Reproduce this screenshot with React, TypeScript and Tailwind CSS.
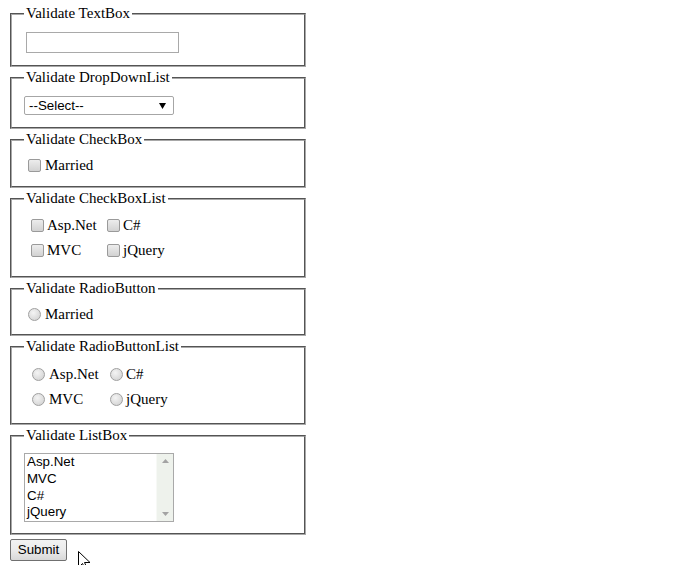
import React from "react";

const legendCls = "px-[2px] text-[15px] leading-[17px] text-black";
const fsCls =
  "box-border w-[296px] border-2 [border-style:groove] border-[#a8a8a8] px-[12px] m-0";

function Check() {
  return (
    <span className="inline-block w-[13px] h-[13px] shrink-0 rounded-[2px] border border-[#9a9a9a] bg-gradient-to-b from-[#ededed] to-[#d2d2d2]" />
  );
}

function Radio() {
  return (
    <span className="inline-block w-[13px] h-[13px] shrink-0 rounded-full border border-[#a0a0a0] bg-[radial-gradient(circle_at_40%_35%,#f4f4f4,#cdcdcd)]" />
  );
}

export default function App() {
  return (
    <div className="relative w-[696px] h-[565px] bg-white pl-[10px] pt-[5px] font-['Liberation_Serif',serif] text-black overflow-hidden">
      <div className="flex flex-col gap-[2px] w-[296px]">
        <fieldset className={`${fsCls} h-[62px]`}>
          <legend className={legendCls}>Validate TextBox</legend>
          <div className="pt-[10px] pl-[2px]">
            <div className="w-[153px] h-[21px] border border-[#a9a9a9] bg-white" />
          </div>
        </fieldset>

        <fieldset className={`${fsCls} h-[60px]`}>
          <legend className={legendCls}>Validate DropDownList</legend>
          <div className="pt-[10px]">
            <div className="flex items-center justify-between w-[150px] h-[19px] border border-[#a6a6a6] rounded-[2px] bg-white pl-[4px] pr-[7px] font-['Liberation_Sans',sans-serif] text-[13.33px] leading-[15px]">
              <span>--Select--</span>
              <svg width="7" height="6" viewBox="0 0 7 6">
                <polygon points="0,0 7,0 3.5,6" fill="#000" />
              </svg>
            </div>
          </div>
        </fieldset>

        <fieldset className={`${fsCls} h-[57px]`}>
          <legend className={legendCls}>Validate CheckBox</legend>
          <div className="pt-[9px]">
            <div className="flex items-center h-[17px] text-[15px] leading-[17px] pl-[4px] gap-[4px]">
              <Check />
              <span>Married</span>
            </div>
          </div>
        </fieldset>

        <fieldset className={`${fsCls} h-[88px]`}>
          <legend className={legendCls}>Validate CheckBoxList</legend>
          <div className="pt-[6px] grid grid-cols-[76px_auto] text-[15px] leading-[17px]">
            <div className="flex items-center h-[25px] pl-[7px] gap-[3px]">
              <Check />
              <span>Asp.Net</span>
            </div>
            <div className="flex items-center h-[25px] pl-[7px] gap-[3px]">
              <Check />
              <span>C#</span>
            </div>
            <div className="flex items-center h-[25px] pl-[7px] gap-[3px]">
              <Check />
              <span>MVC</span>
            </div>
            <div className="flex items-center h-[25px] pl-[7px] gap-[3px]">
              <Check />
              <span>jQuery</span>
            </div>
          </div>
        </fieldset>

        <fieldset className={`${fsCls} h-[56px]`}>
          <legend className={legendCls}>Validate RadioButton</legend>
          <div className="pt-[9px]">
            <div className="flex items-center h-[17px] text-[15px] leading-[17px] pl-[4px] gap-[4px]">
              <Radio />
              <span>Married</span>
            </div>
          </div>
        </fieldset>

        <fieldset className={`${fsCls} h-[87px]`}>
          <legend className={legendCls}>Validate RadioButtonList</legend>
          <div className="pt-[7px] grid grid-cols-[78px_auto] text-[15px] leading-[17px]">
            <div className="flex items-center h-[25px] pl-[8px] gap-[4px]">
              <Radio />
              <span>Asp.Net</span>
            </div>
            <div className="flex items-center h-[25px] pl-[8px] gap-[3px]">
              <Radio />
              <span>C#</span>
            </div>
            <div className="flex items-center h-[25px] pl-[8px] gap-[4px]">
              <Radio />
              <span>MVC</span>
            </div>
            <div className="flex items-center h-[25px] pl-[8px] gap-[3px]">
              <Radio />
              <span>jQuery</span>
            </div>
          </div>
        </fieldset>

        <fieldset className={`${fsCls} h-[108px]`}>
          <legend className={legendCls}>Validate ListBox</legend>
          <div className="pt-[9px]">
            <div className="flex w-[150px] h-[69px] border border-[#a9a9a9] bg-white font-['Liberation_Sans',sans-serif] text-[13.33px]">
              <div className="flex-1 flex flex-col pl-[2px] leading-[16.75px]">
                <span>Asp.Net</span>
                <span>MVC</span>
                <span>C#</span>
                <span>jQuery</span>
              </div>
              <div className="w-[17px] flex flex-col justify-between items-center bg-[#eef2ec] border-l border-[#f7f9f6] py-[5px]">
                <svg width="7" height="4" viewBox="0 0 7 4">
                  <polygon points="0,4 7,4 3.5,0" fill="#a3a3a3" />
                </svg>
                <svg width="7" height="4" viewBox="0 0 7 4">
                  <polygon points="0,0 7,0 3.5,4" fill="#a3a3a3" />
                </svg>
              </div>
            </div>
          </div>
        </fieldset>

        <div>
          <button className="w-[57px] h-[22px] border border-[#707070] rounded-[2px] bg-gradient-to-b from-[#f2f2f2] via-[#ebebeb] to-[#d8d8d8] font-['Liberation_Sans',sans-serif] text-[13.33px] leading-[15px] text-black">
            Submit
          </button>
        </div>
      </div>

      <svg
        className="absolute left-[78px] top-[551px]"
        width="13"
        height="20"
        viewBox="0 0 13 20"
      >
        <path
          d="M0.5 0.5 L0.5 16.5 L4.5 12.5 L7.5 19 L9.5 18 L6.5 11.5 L12 11.5 Z"
          fill="#fff"
          stroke="#000"
          strokeWidth="1"
          strokeLinejoin="miter"
        />
      </svg>
    </div>
  );
}
